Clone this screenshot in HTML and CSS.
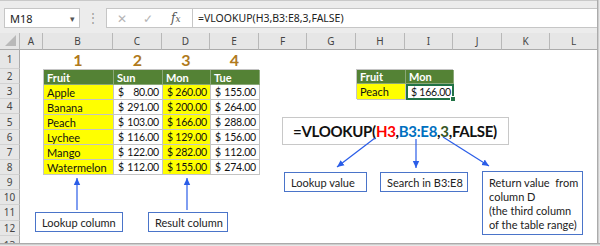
FILE: index.html
```html
<!DOCTYPE html>
<html>
<head>
<meta charset="utf-8">
<link rel="stylesheet" href="styles.css">
</head>
<body>
<div class="page">
  <div class="fbar">
    <div class="namebox"><span>M18</span><span class="caret">&#9662;</span></div>
    <div class="dots">&#8942;</div>
    <div class="fnbox">
      <span class="ico x">&#10005;</span>
      <span class="ico ok">&#10003;</span>
      <span class="ico fx"><i>f</i><span class="fxx">x</span></span>
    </div>
    <div class="finput">=VLOOKUP(H3,B3:E8,3,FALSE)</div>
  </div>

  <div class="sheet">
    <div class="corner"><span class="tri"></span></div>
    <div class="ch">A</div><div class="ch">B</div><div class="ch">C</div><div class="ch">D</div><div class="ch">E</div><div class="ch">F</div><div class="ch">G</div><div class="ch">H</div><div class="ch">I</div><div class="ch">J</div><div class="ch">K</div><div class="ch">L</div>

    <div class="rh r1">1</div>
    <div class="rh r2">2</div>
    <div class="rh r3">3</div>
    <div class="rh r4">4</div>
    <div class="rh r5">5</div>
    <div class="rh r6">6</div>
    <div class="rh r7">7</div>
    <div class="rh r8">8</div>
    <div class="rh r9">9</div>
    <div class="rh r10">10</div>
    <div class="rh r11">11</div>
    <div class="rh r12">12</div>
    <div class="rh r13">13</div>

    <div class="num cB">1</div>
    <div class="num cC">2</div>
    <div class="num cD">3</div>
    <div class="num cE">4</div>

    <div class="tbl main">
      <div class="hd">Fruit</div><div class="hd">Sun</div><div class="hd">Mon</div><div class="hd">Tue</div>
      <div class="y">Apple</div><div class="m"><span>$</span><span>80.00</span></div><div class="m y"><span>$</span><span>260.00</span></div><div class="m"><span>$</span><span>155.00</span></div>
      <div class="y">Banana</div><div class="m"><span>$</span><span>291.00</span></div><div class="m y"><span>$</span><span>200.00</span></div><div class="m"><span>$</span><span>264.00</span></div>
      <div class="y">Peach</div><div class="m"><span>$</span><span>103.00</span></div><div class="m y"><span>$</span><span>166.00</span></div><div class="m"><span>$</span><span>288.00</span></div>
      <div class="y">Lychee</div><div class="m"><span>$</span><span>116.00</span></div><div class="m y"><span>$</span><span>129.00</span></div><div class="m"><span>$</span><span>156.00</span></div>
      <div class="y">Mango</div><div class="m"><span>$</span><span>122.00</span></div><div class="m y"><span>$</span><span>282.00</span></div><div class="m"><span>$</span><span>112.00</span></div>
      <div class="y">Watermelon</div><div class="m"><span>$</span><span>112.00</span></div><div class="m y"><span>$</span><span>155.00</span></div><div class="m"><span>$</span><span>274.00</span></div>
    </div>

    <div class="tbl look">
      <div class="hd">Fruit</div><div class="hd">Mon</div>
      <div class="y">Peach</div><div class="m sel"><span>$</span><span>166.00</span><b class="handle"></b></div>
    </div>
  </div>

  <div class="formula"><span>=VLOOKUP(</span><span class="red">H3</span><span>,</span><span class="blue">B3:E8</span><span>,</span><span class="green">3</span><span>,FALSE)</span></div>

  <div class="callout c-lcol">Lookup column</div>
  <div class="callout c-rcol">Result column</div>
  <div class="callout c-lval">Lookup value</div>
  <div class="callout c-srch">Search in B3:E8</div>
  <div class="callout c-ret">Return value&nbsp; from<br>column D<br>(the third column<br>of the table range)</div>

  <svg class="arrows" width="600" height="246" viewBox="0 0 600 246">
    <defs>
      <marker id="ah" markerWidth="8" markerHeight="8" refX="7" refY="4" orient="auto" markerUnits="userSpaceOnUse">
        <path d="M0,0.8 L7,4 L0,7.2 Z" fill="#2a5de8"/>
      </marker>
    </defs>
    <g stroke="#2a5de8" stroke-width="1.2" fill="none" marker-end="url(#ah)">
      <line x1="77" y1="210" x2="77" y2="178"/>
      <line x1="187" y1="210" x2="187" y2="178"/>
      <line x1="375" y1="138" x2="337" y2="167"/>
      <line x1="416" y1="139" x2="416" y2="168"/>
      <line x1="443" y1="137" x2="489" y2="166"/>
    </g>
  </svg>
  <div class="edge-r"></div>
  <div class="edge-b"></div>
</div>
</body>
</html>
```

FILE: styles.css
```css
* { box-sizing: border-box; }
html, body { margin: 0; padding: 0; background: #ffffff; }
.page {
  position: relative;
  width: 600px;
  height: 246px;
  overflow: hidden;
  font-family: "Noto Sans", sans-serif;
}

/* formula bar */
.fbar {
  height: 33px;
  background: #ececec;
  border-top: 1px solid #c9c9c9;
  display: flex;
  align-items: flex-start;
  padding: 7px 0 0 4px;
}
.namebox {
  width: 76px;
  height: 20px;
  background: #fff;
  border: 1px solid #c6c6c6;
  display: flex;
  justify-content: space-between;
  align-items: center;
  padding: 0 4px 0 5px;
  font-size: 11px;
  color: #222;
}
.caret { font-size: 9px; color: #555; }
.dots {
  width: 26px;
  text-align: center;
  color: #9a9a9a;
  font-size: 12px;
  line-height: 20px;
}
.fnbox {
  width: 86px;
  height: 20px;
  background: #fff;
  border: 1px solid #c6c6c6;
  border-right: none;
  display: flex;
  align-items: center;
  padding-left: 10px;
}
.ico { color: #b4b4b4; font-size: 12px; }
.ico.x { width: 26px; }
.ico.ok { width: 28px; }
.ico.fx { color: #555; font-family: "DejaVu Serif", serif; font-size: 12px; }
.fxx { font-size: 9px; font-style: italic; }
.finput {
  flex: 1;
  height: 20px;
  background: #fff;
  border: 1px solid #c6c6c6;
  font-size: 10.5px;
  line-height: 18px;
  padding-left: 5px;
  color: #222;
}

/* sheet grid */
.sheet {
  display: grid;
  grid-template-columns: 20px 23px 70px 49px 48px 49px 48px 49px 49px 48px 49px 48px 48px;
  grid-template-rows: 17px 19px repeat(11, 15.17px) 20px;
  font-family: "Lato", sans-serif;
}
.corner {
  background: #e6e6e6;
  border-right: 1px solid #b8b8b8;
  border-bottom: 1px solid #ababab;
  position: relative;
}
.tri {
  position: absolute;
  right: 3px;
  bottom: 3px;
  width: 0; height: 0;
  border-left: 11px solid transparent;
  border-bottom: 11px solid #b9b9b9;
}
.ch {
  background: #e6e6e6;
  border-right: 1px solid #b8b8b8;
  border-bottom: 1px solid #ababab;
  font-family: "Noto Sans", sans-serif;
  font-size: 10px;
  color: #444;
  display: flex;
  align-items: center;
  justify-content: center;
}
.rh {
  grid-column: 1;
  background: #e6e6e6;
  border-right: 1px solid #ababab;
  border-bottom: 1px solid #d2d2d2;
  font-family: "Noto Sans", sans-serif;
  font-size: 10px;
  color: #444;
  display: flex;
  align-items: center;
  justify-content: center;
}
.r1 { grid-row: 2; } .r2 { grid-row: 3; } .r3 { grid-row: 4; } .r4 { grid-row: 5; }
.r5 { grid-row: 6; } .r6 { grid-row: 7; } .r7 { grid-row: 8; } .r8 { grid-row: 9; }
.r9 { grid-row: 10; } .r10 { grid-row: 11; } .r11 { grid-row: 12; } .r12 { grid-row: 13; }
.r13 { grid-row: 14; align-items: flex-start; padding-top: 2px; }

.num {
  grid-row: 2;
  text-align: center;
  font-weight: 700;
  font-size: 16px;
  line-height: 19px;
  color: #b07a1c;
}
.cB { grid-column: 3; } .cC { grid-column: 4; } .cD { grid-column: 5; } .cE { grid-column: 6; }

.tbl {
  display: grid;
  border-left: 1px solid #c4c4c4;
  border-top: 1px solid #c4c4c4;
  font-size: 11px;
  color: #111;
}
.tbl.main {
  grid-column: 3 / 7;
  grid-row: 3 / 10;
  grid-template-columns: 70px 49px 48px 49px;
  grid-auto-rows: 1fr;
}
.tbl.look {
  grid-column: 9 / 11;
  grid-row: 3 / 5;
  grid-template-columns: 49px 48px;
  grid-auto-rows: 1fr;
}
.tbl > div {
  border-right: 1px solid #c4c4c4;
  border-bottom: 1px solid #c4c4c4;
  display: flex;
  align-items: center;
  padding: 0 3px;
  white-space: nowrap;
  background: #fff;
}
.tbl > .hd {
  background: #548235;
  color: #fff;
  font-weight: 700;
  border-color: #8aa878;
}
.tbl > .y { background: #ffff00; }
.tbl > .m {
  justify-content: space-between;
  padding: 0 3px 0 4px;
  font-size: 10.5px;
  letter-spacing: -0.2px;
}
.tbl > .sel {
  position: relative;
  border: 2px solid #217346;
  padding: 0 1px 0 3px;
}
.handle {
  position: absolute;
  right: -4px;
  bottom: -4px;
  width: 6px;
  height: 6px;
  background: #217346;
  border: 1px solid #fff;
}

/* annotations */
.formula {
  position: absolute;
  left: 282px;
  top: 117px;
  width: 227px;
  height: 28px;
  background: #fff;
  border: 1px solid #c8c8c8;
  font-family: "Lato", sans-serif;
  font-weight: 700;
  font-size: 15px;
  letter-spacing: -0.3px;
  line-height: 26px;
  padding-left: 10px;
  color: #111;
  white-space: nowrap;
}
.red { color: #ff0000; }
.blue { color: #0070c0; }
.green { color: #375623; }

.callout {
  position: absolute;
  background: #fff;
  border: 1px solid #4a74c9;
  font-family: "Lato", sans-serif;
  font-size: 11px;
  color: #222;
  padding-left: 6px;
  display: flex;
  align-items: center;
  white-space: nowrap;
}
.c-lcol { left: 35px; top: 212px; width: 88px; height: 20px; }
.c-rcol { left: 148px; top: 212px; width: 80px; height: 20px; }
.c-lval { left: 284px; top: 172px; width: 83px; height: 20px; }
.c-srch { left: 380px; top: 172px; width: 88px; height: 20px; }
.c-ret {
  left: 482px; top: 171px; width: 101px; height: 64px;
  align-items: flex-start;
  line-height: 14px;
  padding-top: 4px;
}

.arrows { position: absolute; left: 0; top: 0; pointer-events: none; }

.edge-r {
  position: absolute;
  right: 0; top: 0;
  width: 3px; height: 246px;
  background: linear-gradient(to right, #9a9a9a, #d8d8d8 60%, #f2f2f2);
}
.edge-b {
  position: absolute;
  left: 0; bottom: 0;
  width: 600px; height: 3px;
  background: linear-gradient(to bottom, #9a9a9a, #d8d8d8 60%, #f2f2f2);
}
```
